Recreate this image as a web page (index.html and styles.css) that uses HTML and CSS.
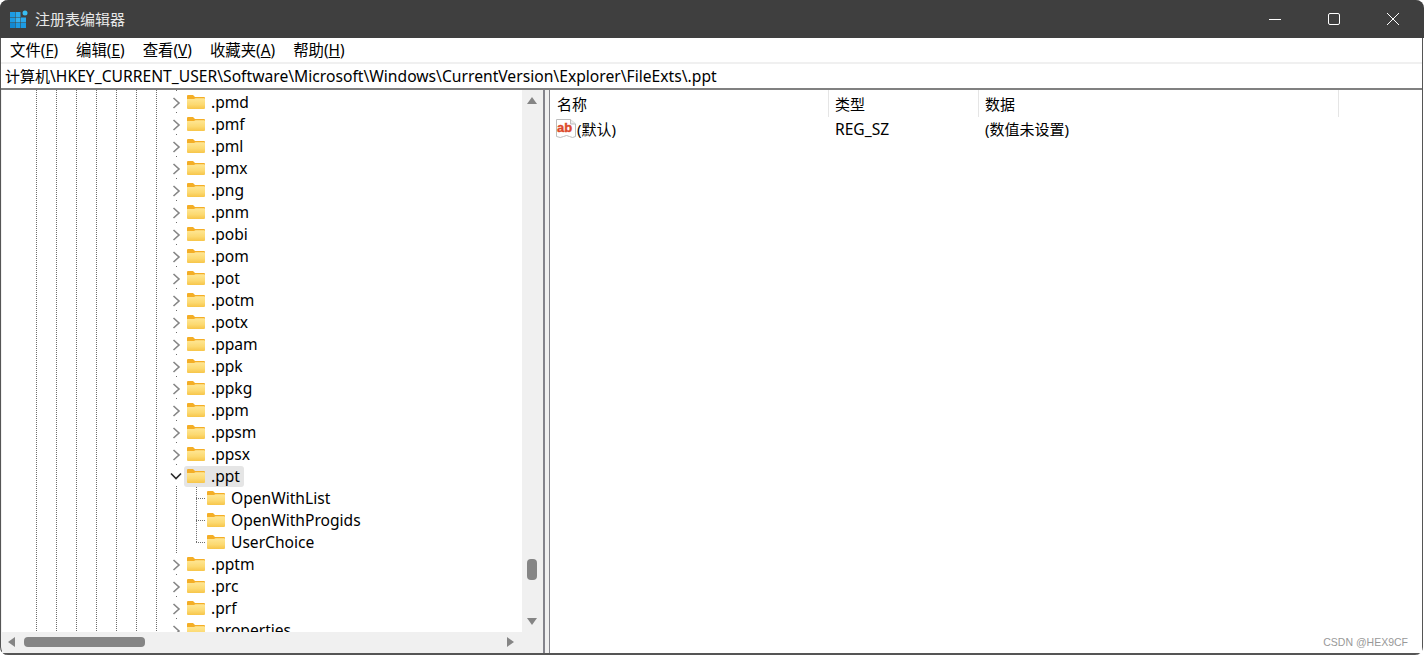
FILE: index.html
```html
<!DOCTYPE html>
<html lang="zh-CN">
<head>
    <meta charset="UTF-8">
    <title>注册表编辑器</title>
    <link rel="stylesheet" href="styles.css">
</head>
<body>

<svg class="defs" width="0" height="0">
    <defs>
        <linearGradient id="folderBody" x1="0" y1="0" x2="0" y2="1">
            <stop offset="0" stop-color="#fee796"/>
            <stop offset="0.6" stop-color="#fcd970"/>
            <stop offset="1" stop-color="#f7c549"/>
        </linearGradient>
        <symbol id="folder" viewBox="0 0 18 14">
            <path d="M0 1Q0 0 1 0H6L8 2H17Q18 2 18 3V5H0Z" fill="#f4ae26"/>
            <path d="M0 4H7L8.500 3.200H17Q18 3.200 18 4.200V13Q18 14 17 14H1Q0 14 0 13Z" fill="url(#folderBody)"/>
        </symbol>
        <symbol id="chevRight" viewBox="0 0 10 20">
            <path d="M2.500 6L8 11L2.500 16" fill="none" stroke="#858585" stroke-width="1.600"/>
        </symbol>
        <symbol id="chevDown" viewBox="0 0 12 20">
            <path d="M1 7.500L6 12.500L11 7.500" fill="none" stroke="#2b2b2b" stroke-width="1.600"/>
        </symbol>
    </defs>
</svg>

<div class="window">
    <div class="titlebar">
        <svg class="app-icon" width="18" height="18" viewBox="0 0 18 18">
            <rect x="0" y="2" width="5" height="5" fill="#1c9be4"/>
            <rect x="5.500" y="2" width="5" height="5" fill="#2ba9ec"/>
            <rect x="0" y="7.500" width="5" height="5" fill="#1c9be4"/>
            <rect x="5.500" y="7.500" width="5" height="5" fill="#35b1f0"/>
            <rect x="11" y="7.500" width="5" height="5" fill="#2ba9ec"/>
            <rect x="0" y="13" width="5" height="5" fill="#1388d0"/>
            <rect x="5.500" y="13" width="5" height="5" fill="#1c9be4"/>
            <rect x="11" y="13" width="5" height="5" fill="#1c9be4"/>
            <circle cx="15" cy="3" r="2.500" fill="#38bdf2"/>
        </svg>
        <span class="title">注册表编辑器</span>
        <div class="win-buttons">
            <svg width="12" height="12" viewBox="0 0 12 12"><path d="M0 6.500H12" stroke="#fff"/></svg>
            <svg width="12" height="12" viewBox="0 0 12 12"><rect x="0.500" y="0.500" width="11" height="11" rx="1.500" fill="none" stroke="#fff"/></svg>
            <svg width="12" height="12" viewBox="0 0 12 12"><path d="M0 0L12 12M12 0L0 12" stroke="#fff"/></svg>
        </div>
    </div>

    <div class="menubar">
        <span class="menu-item">文件(<u>F</u>)</span>
        <span class="menu-item">编辑(<u>E</u>)</span>
        <span class="menu-item">查看(<u>V</u>)</span>
        <span class="menu-item">收藏夹(<u>A</u>)</span>
        <span class="menu-item">帮助(<u>H</u>)</span>
    </div>

    <div class="address"><span class="cjk">计算机</span>\HKEY_CURRENT_USER\Software\Microsoft\Windows\CurrentVersion\Explorer\FileExts\.ppt</div>

    <div class="panes">
        <div class="tree-pane">
            <div class="tree-main">
                <div class="tree">
                    <div class="guides"><i></i><i></i><i></i><i></i><i></i><i></i><i></i><i></i></div>
                    <div class="row"><svg class="chev"><use href="#chevRight"/></svg><svg class="folder"><use href="#folder"/></svg><span class="label">.pmd</span></div>
                    <div class="row"><svg class="chev"><use href="#chevRight"/></svg><svg class="folder"><use href="#folder"/></svg><span class="label">.pmf</span></div>
                    <div class="row"><svg class="chev"><use href="#chevRight"/></svg><svg class="folder"><use href="#folder"/></svg><span class="label">.pml</span></div>
                    <div class="row"><svg class="chev"><use href="#chevRight"/></svg><svg class="folder"><use href="#folder"/></svg><span class="label">.pmx</span></div>
                    <div class="row"><svg class="chev"><use href="#chevRight"/></svg><svg class="folder"><use href="#folder"/></svg><span class="label">.png</span></div>
                    <div class="row"><svg class="chev"><use href="#chevRight"/></svg><svg class="folder"><use href="#folder"/></svg><span class="label">.pnm</span></div>
                    <div class="row"><svg class="chev"><use href="#chevRight"/></svg><svg class="folder"><use href="#folder"/></svg><span class="label">.pobi</span></div>
                    <div class="row"><svg class="chev"><use href="#chevRight"/></svg><svg class="folder"><use href="#folder"/></svg><span class="label">.pom</span></div>
                    <div class="row"><svg class="chev"><use href="#chevRight"/></svg><svg class="folder"><use href="#folder"/></svg><span class="label">.pot</span></div>
                    <div class="row"><svg class="chev"><use href="#chevRight"/></svg><svg class="folder"><use href="#folder"/></svg><span class="label">.potm</span></div>
                    <div class="row"><svg class="chev"><use href="#chevRight"/></svg><svg class="folder"><use href="#folder"/></svg><span class="label">.potx</span></div>
                    <div class="row"><svg class="chev"><use href="#chevRight"/></svg><svg class="folder"><use href="#folder"/></svg><span class="label">.ppam</span></div>
                    <div class="row"><svg class="chev"><use href="#chevRight"/></svg><svg class="folder"><use href="#folder"/></svg><span class="label">.ppk</span></div>
                    <div class="row"><svg class="chev"><use href="#chevRight"/></svg><svg class="folder"><use href="#folder"/></svg><span class="label">.ppkg</span></div>
                    <div class="row"><svg class="chev"><use href="#chevRight"/></svg><svg class="folder"><use href="#folder"/></svg><span class="label">.ppm</span></div>
                    <div class="row"><svg class="chev"><use href="#chevRight"/></svg><svg class="folder"><use href="#folder"/></svg><span class="label">.ppsm</span></div>
                    <div class="row"><svg class="chev"><use href="#chevRight"/></svg><svg class="folder"><use href="#folder"/></svg><span class="label">.ppsx</span></div>
                    <div class="row open"><svg class="chev chev-down"><use href="#chevDown"/></svg><span class="selected"><svg class="folder"><use href="#folder"/></svg><span class="label">.ppt</span></span></div>
                    <div class="row child"><svg class="folder"><use href="#folder"/></svg><span class="label">OpenWithList</span></div>
                    <div class="row child"><svg class="folder"><use href="#folder"/></svg><span class="label">OpenWithProgids</span></div>
                    <div class="row child last"><svg class="folder"><use href="#folder"/></svg><span class="label">UserChoice</span></div>
                    <div class="row"><svg class="chev"><use href="#chevRight"/></svg><svg class="folder"><use href="#folder"/></svg><span class="label">.pptm</span></div>
                    <div class="row"><svg class="chev"><use href="#chevRight"/></svg><svg class="folder"><use href="#folder"/></svg><span class="label">.prc</span></div>
                    <div class="row"><svg class="chev"><use href="#chevRight"/></svg><svg class="folder"><use href="#folder"/></svg><span class="label">.prf</span></div>
                    <div class="row"><svg class="chev"><use href="#chevRight"/></svg><svg class="folder"><use href="#folder"/></svg><span class="label">.properties</span></div>
                </div>
                <div class="vscroll">
                    <span class="arrow-up"></span>
                    <span class="vthumb"></span>
                    <span class="arrow-down"></span>
                </div>
            </div>
            <div class="hscroll">
                <span class="arrow-left"></span>
                <span class="hthumb"></span>
                <span class="arrow-right"></span>
            </div>
        </div>

        <div class="list-pane">
            <div class="list-head">
                <span class="col col-name">名称</span>
                <span class="col col-type">类型</span>
                <span class="col col-data">数据</span>
            </div>
            <div class="list-row">
                <span class="col-name cell-name">
                    <svg class="ab-icon" width="21" height="20" viewBox="0 0 21 20">
                        <path d="M1.500 0.500H15.500L20.500 5V17.500Q17.500 19.500 14.500 17.500T8.500 17.500T1.500 17.500Z" fill="#fff" stroke="#bdbdbd"/>
                        <path d="M15.500 0.500V5H20.500" fill="#eee" stroke="#bdbdbd"/>
                        <text x="2" y="13" class="ab-text">ab</text>
                    </svg>(默认)
                </span>
                <span class="col-type reg-type">REG_SZ</span>
                <span class="col-data">(数值未设置)</span>
            </div>
            <span class="watermark">CSDN @HEX9CF</span>
        </div>
    </div>
</div>

</body>
</html>
```

FILE: styles.css
```css
html, body {
    margin: 0;
    padding: 0;
    height: 100%;
    background-color: #fff;
    overflow: hidden;
}
body {
    font-family: "Noto Sans", "Noto Sans CJK SC", sans-serif;
    font-size: 15px;
    color: #000;
}
.defs {
    display: block;
    height: 0;
}
.window {
    width: 1423px;
    height: 655px;
    display: flex;
    flex-direction: column;
    background-color: #f0f0f0;
    border-radius: 8px;
    box-shadow: inset -1px -2px 0 #555, inset 1px 0 0 #555;
    box-sizing: border-box;
    padding: 0 1px 2px 1px;
}

/* title bar */
.titlebar {
    height: 38px;
    flex: none;
    margin: 0 -2px 0 -1px;
    background-color: #3f3f3f;
    border-radius: 8px 8px 0 0;
    color: #fff;
    display: flex;
    align-items: center;
    padding-left: 10px;
}
.app-icon {
    margin-right: 7px;
}
.title {
    font-size: 15px;
    color: #e8e8e8;
    line-height: 20px;
}
.win-buttons {
    margin-left: auto;
    display: flex;
    align-items: center;
    gap: 47px;
    padding-right: 25px;
}

/* menu + address */
.menubar {
    height: 24px;
    flex: none;
    background-color: #fff;
    display: flex;
    gap: 18px;
    padding-left: 9px;
    line-height: 25px;
    font-size: 15.4px;
}
.address {
    height: 24px;
    flex: none;
    margin-top: 2px;
    background-color: #fff;
    padding-left: 4px;
    font-size: 15.66px;
    line-height: 25px;
    white-space: nowrap;
    border-bottom: 2px solid #808080;
}
.cjk {
    font-size: 15px;
}

/* panes */
.panes {
    flex: 1;
    min-height: 0;
    display: flex;
}
.tree-pane {
    width: 541px;
    margin-left: 1px;
    display: flex;
    flex-direction: column;
    border-right: 2px solid #84848c;
}
.tree-main {
    flex: 1;
    min-height: 0;
    display: flex;
}
.tree {
    position: relative;
    flex: 1;
    min-width: 0;
    overflow: hidden;
    background-color: #fff;
    padding-top: 1px;
    font-size: 15.6px;
}
.guides {
    position: absolute;
    top: 0;
    bottom: 0;
    left: 34px;
    display: flex;
    gap: 19px;
}
.guides i {
    width: 1px;
    height: 100%;
    background-image: linear-gradient(#6e6e6e 50%, transparent 50%);
    background-size: 1px 2px;
}
.row {
    position: relative;
    height: 22px;
    display: flex;
    align-items: center;
    padding-left: 169px;
    white-space: nowrap;
}
.chev {
    width: 10px;
    height: 20px;
    margin-right: 6px;
    flex: none;
    background-color: #fff;
}
.folder {
    width: 18px;
    height: 14px;
    flex: none;
    margin-right: 6px;
}
.label {
    line-height: 22px;
}
.row.open {
    padding-left: 168px;
}
.chev-down {
    width: 12px;
    margin-right: 2px;
}
.selected {
    display: flex;
    align-items: center;
    height: 21px;
    padding: 0 4px 0 3px;
    background-color: #e5e5e5;
    border-radius: 3px;
}
.row.child {
    padding-left: 205px;
}
/* tree connector, dotted elbow */
.row.child::before {
    content: "";
    position: absolute;
    left: 194px;
    top: 0;
    width: 9px;
    height: 100%;
    background-image:
        linear-gradient(#6e6e6e 50%, transparent 50%),
        linear-gradient(90deg, #6e6e6e 50%, transparent 50%);
    background-size: 1px 2px, 2px 1px;
    background-repeat: repeat-y, repeat-x;
    background-position: 0 0, 0 11px;
}
.row.child.last::before {
    height: 12px;
}

/* scroll bars */
.vscroll {
    width: 21px;
    flex: none;
    position: relative;
    background-color: #f0f0f0;
}
.arrow-up, .arrow-down, .vthumb, .arrow-left, .arrow-right, .hthumb {
    position: absolute;
}
.arrow-up {
    top: 7px;
    left: 5px;
    border: 5px solid transparent;
    border-top: 0;
    border-bottom: 7px solid #858585;
}
.arrow-down {
    bottom: 7px;
    left: 5px;
    border: 5px solid transparent;
    border-bottom: 0;
    border-top: 7px solid #858585;
}
.vthumb {
    top: 469px;
    left: 5px;
    width: 10px;
    height: 21px;
    background-color: #858585;
    border-radius: 4px;
}
.hscroll {
    height: 21px;
    flex: none;
    position: relative;
    background-color: #f0f0f0;
}
.arrow-left {
    top: 5px;
    left: 6px;
    border: 5px solid transparent;
    border-left: 0;
    border-right: 7px solid #858585;
}
.arrow-right {
    top: 5px;
    left: 505px;
    border: 5px solid transparent;
    border-right: 0;
    border-left: 7px solid #858585;
}
.hthumb {
    top: 5px;
    left: 22px;
    width: 121px;
    height: 10px;
    background-color: #858585;
    border-radius: 4px;
}

/* list on the right */
.list-pane {
    position: relative;
    flex: 1;
    min-width: 0;
    margin-left: 4px;
    background-color: #fff;
    border-left: 1px solid #84848c;
}
.list-head {
    display: flex;
    height: 28px;
    line-height: 28px;
    font-size: 15px;
}
.col {
    height: 27px;
    border-right: 1px solid #e5e5e5;
    box-sizing: border-box;
}
.col-name {
    width: 279px;
    padding-left: 7px;
    box-sizing: border-box;
}
.col-type {
    width: 150px;
    padding-left: 6px;
    box-sizing: border-box;
}
.col-data {
    width: 360px;
    padding-left: 6px;
    box-sizing: border-box;
}
.list-row {
    display: flex;
    height: 22px;
    line-height: 22px;
    font-size: 15px;
}
.reg-type {
    font-size: 15.6px;
}
.cell-name {
    display: flex;
    align-items: center;
    padding-left: 5px;
}
.ab-icon {
    margin-right: 1px;
}
.ab-text {
    font-family: "Liberation Sans", sans-serif;
    font-size: 13px;
    font-weight: 700;
    fill: #dc4a2c;
    stroke: #dc4a2c;
    stroke-width: 0.4px;
}
.watermark {
    position: absolute;
    right: 14px;
    bottom: 4px;
    font-size: 10.5px;
    line-height: 14px;
    color: #999;
    font-family: "Liberation Sans", sans-serif;
}
```
